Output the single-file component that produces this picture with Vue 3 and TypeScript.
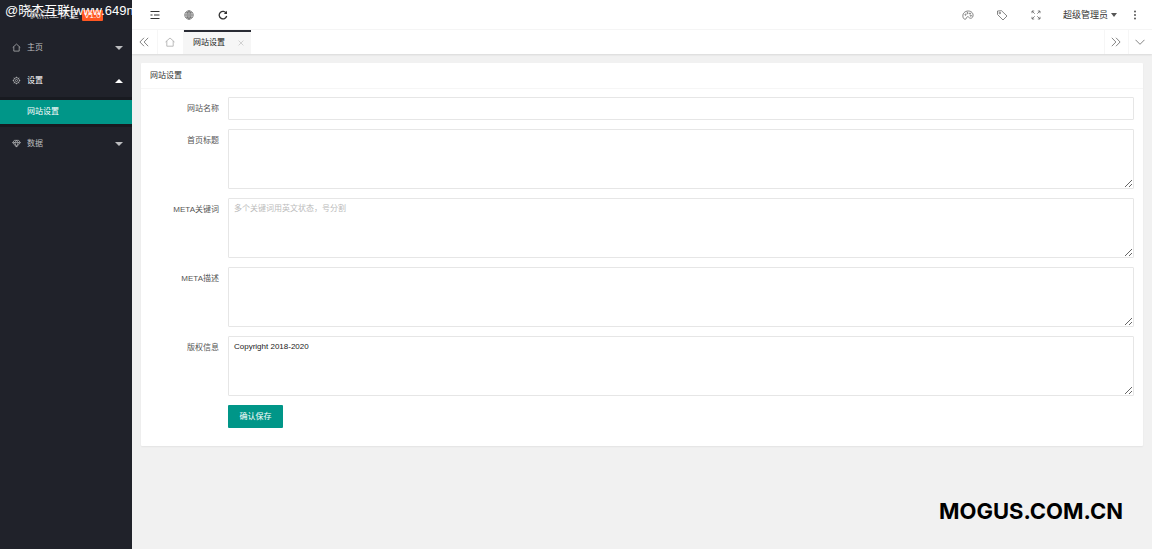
<script setup lang="ts">
import { ref } from 'vue'

interface Field {
  id: string
  label: string
  multiline: boolean
  placeholder?: string
  value: string
}

const fields = ref<Field[]>([
  { id: 'sitename', label: '网站名称', multiline: false, value: '' },
  { id: 'title', label: '首页标题', multiline: true, value: '' },
  { id: 'keywords', label: 'META关键词', multiline: true, placeholder: '多个关键词用英文状态，号分割', value: '' },
  { id: 'descript', label: 'META描述', multiline: true, value: '' },
  { id: 'copyright', label: '版权信息', multiline: true, value: 'Copyright 2018-2020' },
])
</script>

<template>
  <div class="layout">
    <aside class="side">
      <div class="logo">
        <span class="logo-name">枫点工作室</span>
        <span class="version">V1.0</span>
        <span class="mark">@晓杰互联[www.649n</span>
      </div>
      <nav>
        <a href="#" class="item">
          <svg viewBox="0 0 10 10" class="nav-icon"><path d="M.8 5 5 1.2 9.2 5M2 4.2V9h6V4.2" /></svg>
          <span>主页</span>
          <i class="caret"></i>
        </a>
        <a href="#" class="item open">
          <svg viewBox="0 0 10 10" class="nav-icon"><circle cx="5" cy="5" r="3.2" /><circle cx="5" cy="5" r="1.2" /><path d="M5 .8v1.4M5 7.8v1.4M.8 5h1.4M7.8 5h1.4M2 2l1 1M7 7l1 1M8 2 7 3M3 7 2 8" /></svg>
          <span>设置</span>
          <i class="caret up"></i>
        </a>
        <div class="sub">
          <a href="#" class="sub-item">网站设置</a>
        </div>
        <a href="#" class="item">
          <svg viewBox="0 0 10 10" class="nav-icon"><path d="M2.6 1.5h4.8L9.3 4 5 9 .7 4zM.7 4h8.6M3 4l2 4.6L7 4M3 4l2-2.3L7 4" /></svg>
          <span>数据</span>
          <i class="caret"></i>
        </a>
      </nav>
    </aside>

    <div class="main">
      <header class="topbar">
        <div class="group">
          <button type="button" class="tool" aria-label="侧边伸缩">
            <svg viewBox="0 0 10 10" class="dark"><path d="M.5 1.5h9M.5 8.5h9M4 5h5.5M.5 5h2" /></svg>
          </button>
          <button type="button" class="tool" aria-label="前台">
            <svg viewBox="0 0 10 10"><circle cx="5" cy="5" r="4.2" /><ellipse cx="5" cy="5" rx="2" ry="4.2" /><path d="M.8 5h8.4M5 .8v8.4M1.5 2.9h7M1.5 7.1h7" /></svg>
          </button>
          <button type="button" class="tool" aria-label="刷新">
            <svg viewBox="0 0 10 10" class="dark refresh"><path d="M8.3 3.2A3.8 3.8 0 1 0 8.7 6" /><path d="M9 .8v3.2H5.8z" class="solid" /></svg>
          </button>
        </div>
        <div class="group">
          <button type="button" class="tool" aria-label="主题">
            <svg viewBox="0 0 12 12" class="wide"><path d="M1.2 8.8C-.2 4.5 3 2 6.200 2s5.300 2.200 4.800 5c-.3 2-2 2.600-3.200 2.100-1-.5-1.300-1.700-2.500-1.300-1.200.5-.6 2.300-2 2.400-1 .1-1.700-.5-2.100-1.400z" /><circle cx="3.500" cy="5.700" r=".6" /><circle cx="5.500" cy="4.100" r=".6" /><circle cx="8" cy="4.500" r=".6" /><circle cx="8.800" cy="6.700" r=".6" /></svg>
          </button>
          <button type="button" class="tool" aria-label="便签">
            <svg viewBox="0 0 12 12" class="wide"><path d="M1.500 2v3.500L7 11l4-4-5.500-5.300z" /><circle cx="3.800" cy="4" r=".8" /></svg>
          </button>
          <button type="button" class="tool" aria-label="全屏">
            <svg viewBox="0 0 10 10"><path d="M1 3.200V1h2.200M1 1l2.700 2.700M6.800 1H9v2.200M9 1 6.300 3.700M1 6.800V9h2.200M1 9l2.700-2.700M9 6.800V9H6.800M9 9 6.300 6.300" /></svg>
          </button>
          <button type="button" class="user">超级管理员<i class="caret"></i></button>
          <button type="button" class="more" aria-label="更多">
            <svg viewBox="0 0 10 10"><g class="dots"><circle cx="5" cy="1.500" r=".9" /><circle cx="5" cy="5" r=".9" /><circle cx="5" cy="8.500" r=".9" /></g></svg>
          </button>
        </div>
      </header>

      <div class="tabs">
        <button type="button" class="tab-ctl" aria-label="向左">
          <svg viewBox="0 0 10 10"><path d="M5 .8.900 5 5 9.200M9.200.8 5.100 5l4.100 4.200" /></svg>
        </button>
        <button type="button" class="tab-ctl" aria-label="主页">
          <svg viewBox="0 0 10 10" class="pale"><path d="M.5 5 5 1l4.500 4M1.800 4v5.200h6.400V4" /></svg>
        </button>
        <div class="tab">
          <a href="#">网站设置</a>
          <button type="button" class="close" aria-label="关闭">
            <svg viewBox="0 0 10 10"><path d="m2 2 6 6M8 2 2 8" /></svg>
          </button>
        </div>
        <div class="spacer"></div>
        <button type="button" class="tab-ctl right" aria-label="向右">
          <svg viewBox="0 0 10 10"><path d="M5 .8 9.100 5 5 9.200M.8.8 4.900 5 .8 9.200" /></svg>
        </button>
        <button type="button" class="tab-ctl right" aria-label="标签菜单">
          <svg viewBox="0 0 10 10"><path d="m.5 2.800 4.500 4.500 4.500-4.500" /></svg>
        </button>
      </div>

      <main class="body">
        <section class="card">
          <h1 class="card-title">网站设置</h1>
          <form class="form" @submit.prevent>
            <div v-for="f in fields" :key="f.id" class="row">
              <label :for="f.id">{{ f.label }}</label>
              <textarea v-if="f.multiline" :id="f.id" v-model="f.value" :placeholder="f.placeholder"></textarea>
              <input v-else :id="f.id" v-model="f.value" type="text" />
            </div>
            <button type="submit" class="save">确认保存</button>
          </form>
        </section>
      </main>
      <div class="brand">MOGUS.COM.CN</div>
    </div>
  </div>
</template>

<style>
body {
  margin: 0;
  background: #f1f1f1;
}
</style>

<style scoped>
.layout {
  display: flex;
  min-height: 100vh;
  font: 8px/14px "Liberation Sans", "Noto Sans CJK SC", sans-serif;
  color: #555;
}
.layout * {
  box-sizing: border-box;
}
a {
  color: inherit;
  text-decoration: none;
}
button {
  margin: 0;
  padding: 0;
  border: 0;
  background: none;
  font: inherit;
  color: inherit;
}
svg {
  display: block;
  width: 10px;
  height: 10px;
  fill: none;
  stroke: #666;
  stroke-width: 0.8;
}
svg.wide {
  width: 12px;
  height: 12px;
}
svg.dark {
  stroke: #333;
  stroke-width: 1;
}
svg.refresh {
  stroke-width: 1.3;
}
svg.pale {
  stroke: #aaa;
}
.solid {
  fill: #333;
  stroke: none;
}
.dots {
  fill: #444;
  stroke: none;
}
.side {
  flex: 0 0 132px;
  background: #20222a;
  color: #bcbdbf;
}
nav {
  padding-top: 1px;
}
.logo {
  position: relative;
  display: flex;
  align-items: center;
  gap: 3px;
  height: 30px;
  padding-left: 29px;
  font-size: 10px;
  white-space: nowrap;
  overflow: hidden;
}
.version {
  width: 21px;
  height: 11px;
  border-radius: 1px;
  background: #ff5722;
  color: #fff;
  font-size: 8px;
  line-height: 11px;
  text-align: center;
}
.mark {
  position: absolute;
  left: 5px;
  top: 3px;
  color: #fff;
  font: 13px/15px "Liberation Sans", "Noto Sans CJK SC", sans-serif;
}
.item {
  display: flex;
  align-items: center;
  height: 33px;
  padding: 0 9px 0 12px;
}
.item span {
  flex: 1;
}
.item.open {
  color: #fff;
}
.nav-icon {
  width: 9px;
  height: 9px;
  margin-right: 6px;
  stroke: #bcbdbf;
}
.caret {
  border: 4px solid transparent;
  border-top-color: currentColor;
  border-bottom-width: 0;
}
.caret.up {
  border-width: 0 4px 4px;
  border-bottom-color: currentColor;
}
.sub {
  padding: 3px 0;
  background: #181a20;
}
.sub-item {
  display: block;
  height: 24px;
  padding-left: 27px;
  background: #009688;
  color: #fff;
  line-height: 24px;
}
.main {
  display: flex;
  flex: 1;
  flex-direction: column;
  min-width: 0;
}
.topbar {
  display: flex;
  justify-content: space-between;
  height: 30px;
  padding-left: 6px;
  border-bottom: 1px solid #f6f6f6;
  background: #fff;
}
.group {
  display: flex;
  align-items: center;
  padding-top: 1px;
}
.tool {
  display: grid;
  place-items: center;
  width: 34px;
  height: 28px;
}
.user {
  display: flex;
  align-items: center;
  gap: 3px;
  margin-left: 10px;
  color: #333;
  font-size: 9px;
}
.user .caret {
  border-left-width: 3px;
  border-right-width: 3px;
  color: #555;
}
.more {
  display: grid;
  place-items: center;
  width: 35px;
  height: 28px;
}
.tabs {
  display: flex;
  height: 24px;
  background: #fff;
  box-shadow: 0 1px 2px rgba(0, 0, 0, 0.1);
}
.tab-ctl {
  display: grid;
  place-items: center;
  width: 26px;
  padding-right: 2px;
  border-right: 1px solid #f6f6f6;
}
.tab-ctl.right {
  width: 24px;
  border-right: 0;
  border-left: 1px solid #f6f6f6;
}
.tab {
  display: flex;
  align-items: center;
  justify-content: space-between;
  width: 67px;
  padding: 0 6px 0 9px;
  border-top: 2px solid #292b34;
  background: #f6f6f6;
  color: #222;
}
.close svg {
  width: 8px;
  height: 8px;
  stroke: #bbb;
}
.spacer {
  flex: 1;
}
.body {
  padding: 9px;
}
.card {
  border-radius: 1px;
  background: #fff;
  box-shadow: 0 1px 2px rgba(0, 0, 0, 0.06);
}
.card-title {
  height: 26px;
  margin: 0;
  padding-left: 9px;
  border-bottom: 1px solid #f6f6f6;
  color: #333;
  font-size: 8px;
  font-weight: 400;
  line-height: 25px;
}
.form {
  display: flex;
  flex-direction: column;
  gap: 9px;
  padding: 8px 9px 18px;
}
.row {
  display: flex;
}
.row label {
  flex: 0 0 78px;
  padding-right: 9px;
  line-height: 23px;
  text-align: right;
}
.row input,
.row textarea {
  flex: 1;
  min-width: 0;
  margin: 0;
  padding: 3px 5px;
  border: 1px solid #e6e6e6;
  border-radius: 1px;
  outline: 0;
  background: #fff;
  color: #222;
  font: inherit;
}
.row input {
  height: 23px;
}
.row textarea {
  height: 60px;
  resize: vertical;
}
.row ::placeholder {
  color: #bbb;
}
.save {
  align-self: flex-start;
  width: 55px;
  height: 23px;
  margin-left: 78px;
  border-radius: 1px;
  background: #009688;
  color: #fff;
}
.brand {
  margin: auto 29px 24px auto;
  color: #000;
  font: 700 22px/28px Inter, sans-serif;
}
</style>
